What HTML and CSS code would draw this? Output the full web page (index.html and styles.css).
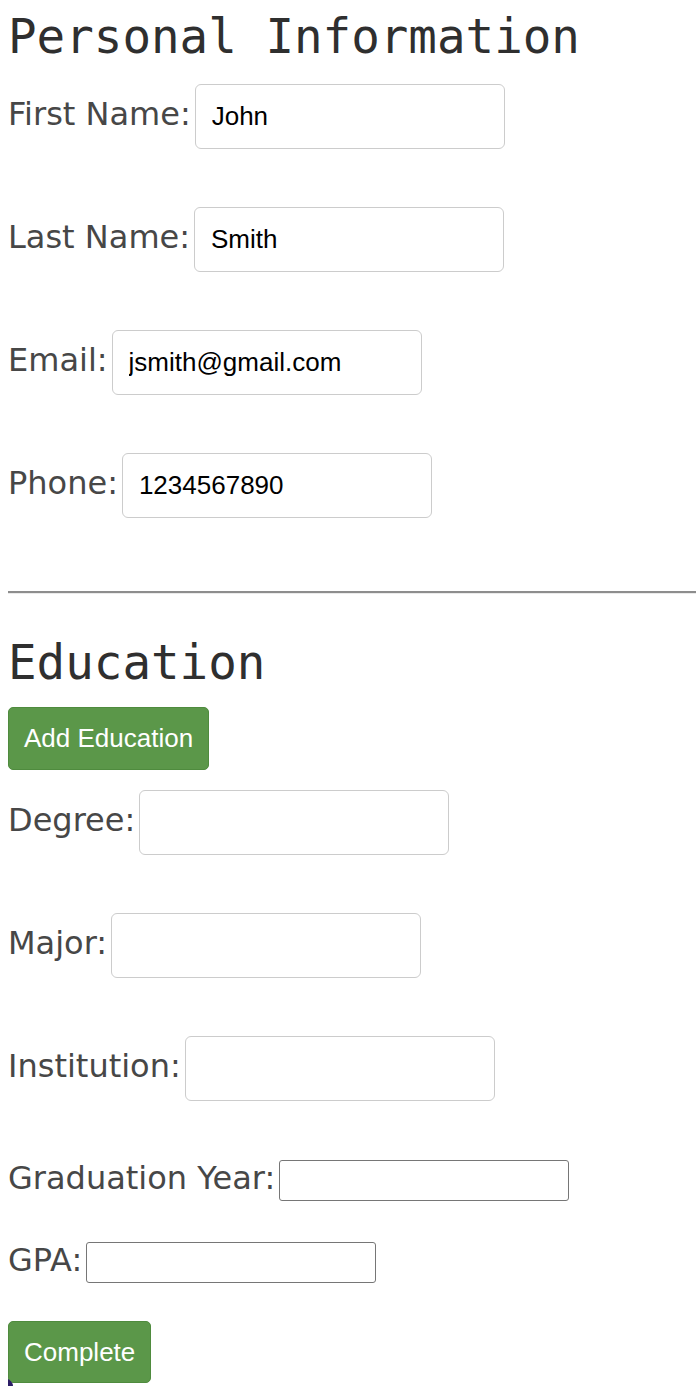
FILE: index.html
```html
<!DOCTYPE html>
<html lang="en">
<head>
<meta charset="utf-8">
<title>Resume Form</title>
<link rel="stylesheet" href="styles.css">
</head>
<body>
<h2 class="title title-first">Personal Information</h2>
<div class="row"><label class="label">First Name:</label><input class="field" type="text" value="John"></div>
<div class="row"><label class="label">Last Name:</label><input class="field" type="text" value="Smith"></div>
<div class="row"><label class="label">Email:</label><input class="field" type="text" value="jsmith@gmail.com"></div>
<div class="row"><label class="label">Phone:</label><input class="field" type="text" value="1234567890"></div>
<hr class="divider">
<h2 class="title title-second">Education</h2>
<button class="btn btn-add" type="button">Add Education</button>
<div class="row"><label class="label">Degree:</label><input class="field" type="text"></div>
<div class="row"><label class="label">Major:</label><input class="field" type="text"></div>
<div class="row"><label class="label">Institution:</label><input class="field" type="text"></div>
<div class="row row-small"><label class="label">Graduation Year:</label><input class="plain" type="text"></div>
<div class="row row-gpa"><label class="label">GPA:</label><input class="plain" type="text"></div>
<button class="btn btn-complete" type="button">Complete</button>
<div class="corner"></div>
</body>
</html>
```

FILE: styles.css
```css
html {
  background: #ffffff;
  overflow: hidden;
}

body {
  margin: 0 0 0 8px;
  font-family: "DejaVu Sans", Verdana, sans-serif;
  color: #474747;
  position: relative;
  min-height: 1386px;
}

.title {
  font-family: "DejaVu Sans Mono", monospace;
  font-size: 47.5px;
  line-height: 54px;
  font-weight: normal;
  color: #2f2f2f;
  margin: 0;
}

.title-first {
  margin: 10px 0 20px;
}

.title-second {
  margin: 42px 0 17px;
}

.row {
  display: flex;
  align-items: baseline;
  margin-bottom: 58px;
}

.row-small {
  margin-bottom: 40px;
}

.row-gpa {
  margin-bottom: 38px;
}

.label {
  font-size: 32px;
  line-height: normal;
  margin-right: 4px;
}

.field {
  box-sizing: border-box;
  width: 310px;
  height: 65px;
  margin: 0;
  padding: 0 16px;
  border: 1px solid #cccccc;
  border-radius: 6px;
  background: #ffffff;
  font-family: "Liberation Sans", Arial, sans-serif;
  font-size: 26px;
  color: #000000;
  outline: none;
}

.plain {
  box-sizing: border-box;
  width: 290px;
  height: 41px;
  margin: 0;
  padding: 0 2px;
  border: 1px solid #767676;
  border-radius: 3px;
  background: #ffffff;
  font-family: "Liberation Sans", Arial, sans-serif;
  font-size: 26px;
  color: #000000;
}

.divider {
  height: 0;
  margin: 73px 0 0;
  border: 0;
  border-top: 2px solid #8d8d8d;
  border-bottom: 1px solid #eaeaea;
}

.btn {
  display: block;
  box-sizing: border-box;
  margin: 0;
  padding: 0 15px;
  background: #5b9749;
  border: 1px solid #4f8b3e;
  border-radius: 5px;
  color: #ffffff;
  font-family: "Liberation Sans", Arial, sans-serif;
  font-size: 26px;
  cursor: pointer;
}

.btn-add {
  height: 63px;
  margin-bottom: 20px;
}

.btn-complete {
  height: 62px;
}

.corner {
  position: absolute;
  left: -8px;
  top: 1377px;
  width: 13px;
  height: 9px;
  background: #2c1d66;
  border-top-right-radius: 13px 9px;
}
```
